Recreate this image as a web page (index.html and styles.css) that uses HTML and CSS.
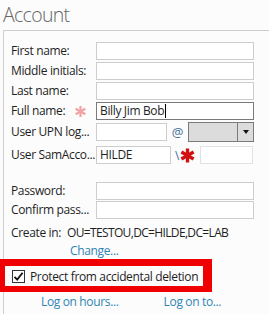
FILE: index.html
```html
<!DOCTYPE html>
<html>
<head>
<meta charset="utf-8">
<link rel="stylesheet" href="styles.css">
</head>
<body>
<div class="page">
  <div class="title">Account</div>
  <div class="group">
    <div class="row r1">
      <div class="label">First name:</div>
      <div class="box full"></div>
    </div>
    <div class="row">
      <div class="label">Middle initials:</div>
      <div class="box full"></div>
    </div>
    <div class="row">
      <div class="label">Last name:</div>
      <div class="box full"></div>
    </div>
    <div class="row">
      <div class="label with-star">Full name:
        <svg class="pink-star" width="11" height="11" viewBox="0 0 11 11"><g stroke="#f0a3a3" stroke-width="2.2" stroke-linecap="butt"><line x1="5.5" y1="0" x2="5.5" y2="11"/><line x1="0.7" y1="2.75" x2="10.3" y2="8.25"/><line x1="0.7" y1="8.25" x2="10.3" y2="2.75"/></g></svg>
      </div>
      <div class="box full dark"><span class="val">Billy Jim Bob</span><span class="caret"></span></div>
    </div>
    <div class="row upn">
      <div class="label">User UPN log...</div>
      <div class="box upn-box"></div>
      <span class="at">@</span>
      <div class="combo"><div class="combo-field"></div><div class="combo-btn"><span class="tri"></span></div></div>
    </div>
    <div class="row sam">
      <div class="label">User SamAcco...</div>
      <div class="box sam-box"><span class="val">HILDE</span></div>
      <span class="slash">\</span>
      <svg class="red-star" width="15" height="15" viewBox="0 0 15 15"><g stroke="#d11111" stroke-width="3.4"><line x1="7.5" y1="0.5" x2="7.5" y2="14.5"/><line x1="1.4" y1="4" x2="13.6" y2="11"/><line x1="1.4" y1="11" x2="13.6" y2="4"/></g></svg>
      <div class="box sam-dom"></div>
    </div>
    <div class="row pw">
      <div class="label">Password:</div>
      <div class="box full"></div>
    </div>
    <div class="row cpw">
      <div class="label">Confirm pass...</div>
      <div class="box full"></div>
    </div>
    <div class="create"><span>Create in:</span><span class="ou">OU=TESTOU,DC=HILDE,DC=LAB</span></div>
    <div class="change"><span class="link">Change...</span></div>
    <div class="protect">
      <span class="check"><svg width="11" height="11" viewBox="0 0 11 11"><path d="M1.5 5.8 L4.2 8.6 L9.6 1.8" fill="none" stroke="#111" stroke-width="1.8"/></svg></span>
      <span class="ptext">Protect from accidental deletion</span>
    </div>
    <div class="logon">
      <span class="link hours">Log on hours...</span>
      <span class="link to">Log on to...</span>
    </div>
  </div>
</div>
</body>
</html>
```

FILE: styles.css
```css
html, body {
  margin: 0;
  padding: 0;
  background: #fcfcfc;
}
body {
  font-family: "Open Sans", "Noto Sans", sans-serif;
  font-size: 12px;
  letter-spacing: -0.35px;
  color: #1e1e1e;
  width: 269px;
  height: 314px;
  overflow: hidden;
}
.page {
  width: 269px;
}
.title {
  height: 30px;
  box-sizing: border-box;
  padding-left: 3px;
  padding-top: 1px;
  font-size: 19.5px;
  font-weight: 300;
  letter-spacing: -0.7px;
  color: #666666;
  line-height: 28px;
}
.group {
  box-sizing: border-box;
  margin-left: 3px;
  border-left: 1px solid #cfcfcf;
  border-top: 1px solid #cfcfcf;
  padding-left: 7px;
  padding-top: 11px;
  height: 284px;
}
.row {
  display: flex;
  align-items: center;
  height: 18px;
  margin-bottom: 2px;
}
.label {
  width: 85px;
  flex: none;
  white-space: nowrap;
  line-height: 18px;
  display: flex;
  align-items: center;
}
.with-star {
  justify-content: space-between;
}
.pink-star {
  margin-right: 10px;
}
.box {
  box-sizing: border-box;
  height: 18px;
  border: 1px solid #cdcdcd;
  background: #ffffff;
  display: flex;
  align-items: center;
  padding-left: 3px;
  line-height: 16px;
}
.box.full {
  width: 158px;
}
.box.dark {
  border-color: #7a7a7a;
}
.caret {
  display: inline-block;
  width: 1px;
  height: 14px;
  background: #000;
  margin-left: 1px;
}
.upn {
  height: 20px;
  margin-bottom: 4px;
}
.upn-box {
  width: 71px;
}
.at {
  width: 21px;
  text-align: center;
  color: #3c6f95;
  font-size: 13px;
}
.combo {
  box-sizing: border-box;
  width: 66px;
  height: 20px;
  border: 1px solid #7a7a7a;
  background: #dcdcdc;
  display: flex;
}
.combo-field {
  flex: 1;
}
.combo-btn {
  width: 15px;
  border-left: 1px solid #7a7a7a;
  display: flex;
  align-items: center;
  justify-content: center;
}
.tri {
  width: 0;
  height: 0;
  border-left: 3.5px solid transparent;
  border-right: 3.5px solid transparent;
  border-top: 4px solid #111;
}
.sam {
  margin-bottom: 18px;
}
.sam-box {
  width: 75px;
}
.slash {
  margin-left: 4px;
  color: #3c6f95;
}
.red-star {
  margin-left: 1px;
}
.sam-dom {
  width: 53px;
  margin-left: 5px;
  border-color: #e2e2e2;
}
.pw {
  margin-bottom: 1px;
}
.cpw {
  margin-bottom: 6px;
}
.create {
  line-height: 16px;
  white-space: nowrap;
  display: flex;
}
.ou {
  margin-left: 6px;
  letter-spacing: -0.65px;
}
.change {
  line-height: 16px;
  margin-top: 2px;
  padding-left: 59px;
}
.link {
  color: #2e84b4;
}
.protect {
  margin-left: -11px;
  width: 212px;
  height: 33px;
  box-sizing: border-box;
  border-style: solid;
  border-color: #f00000;
  border-width: 7px 9px 6px 5px;
  display: flex;
  align-items: center;
  padding-left: 7px;
}
.check {
  box-sizing: border-box;
  width: 13px;
  height: 13px;
  border: 1px solid #333;
  background: #fff;
  display: flex;
  align-items: center;
  justify-content: center;
  margin-right: 5px;
}
.check svg {
  display: block;
}
.ptext {
  white-space: nowrap;
}
.logon {
  display: flex;
  line-height: 18px;
  margin-top: 1px;
}
.hours {
  margin-left: 30px;
}
.to {
  margin-left: 45px;
}
```
